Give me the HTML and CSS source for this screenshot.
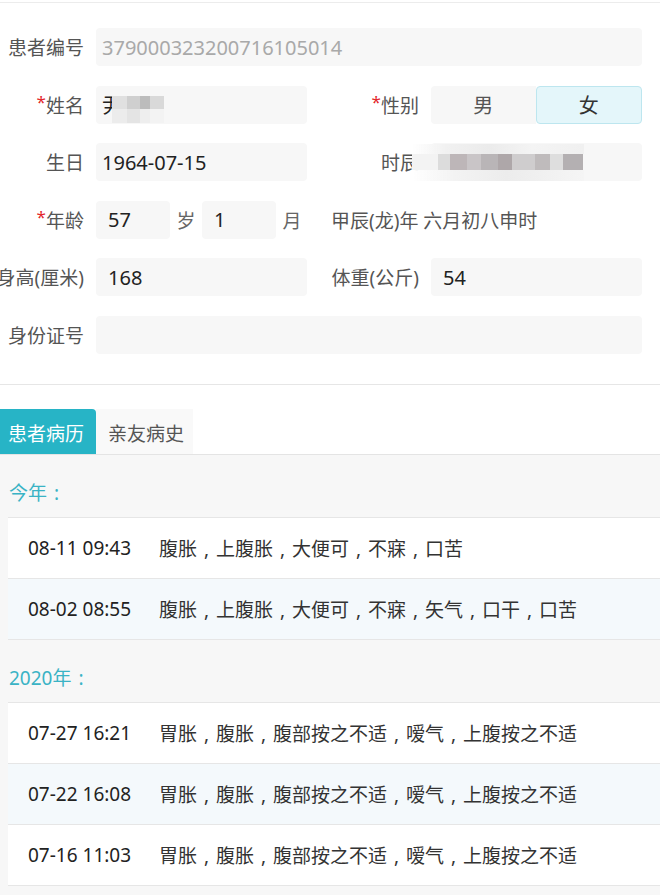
FILE: index.html
```html
<!DOCTYPE html>
<html lang="zh-CN">
<head>
<meta charset="utf-8">
<title>患者信息</title>
<link rel="stylesheet" href="styles.css">
</head>
<body>
<div class="page">
  <section class="form">
    <div class="row">
      <div class="field full">
        <div class="label">患者编号</div>
        <div class="input disabled">379000323200716105014</div>
      </div>
    </div>
    <div class="row">
      <div class="field">
        <div class="label"><span class="req">*</span>姓名</div>
        <div class="input">尹
          <div class="mosaic name-mosaic">
            <i class="c1"></i><i class="c2"></i><i class="c3"></i><i class="c4"></i>
            <i class="c5"></i><i class="c6"></i><i class="c7"></i><i class="c8"></i>
          </div>
        </div>
      </div>
      <div class="field right">
        <div class="label"><span class="req">*</span>性别</div>
        <div class="toggle"><span>男</span><span class="on">女</span></div>
      </div>
    </div>
    <div class="row">
      <div class="field">
        <div class="label">生日</div>
        <div class="input">1964-07-15</div>
      </div>
      <div class="field right">
        <div class="label">时辰</div>
        <div class="input"></div>
        <div class="mosaic time-mosaic">
          <div class="band top"></div>
          <div class="band mid">
            <i style="width:26px;background:#f3f3f3"></i>
            <i style="width:12px;background:#dcdcdc"></i>
            <i style="width:17px;background:#bdb6b8"></i>
            <i style="width:14px;background:#c9c5c7"></i>
            <i style="width:17px;background:#b9b5b7"></i>
            <i style="width:14px;background:#aea7a9"></i>
            <i style="width:23px;background:#cfcdce"></i>
            <i style="width:15px;background:#bfbbbc"></i>
            <i style="width:13px;background:#dedede"></i>
            <i style="width:20px;background:#b4b0b2"></i>
          </div>
          <div class="band bottom"></div>
        </div>
      </div>
    </div>
    <div class="row">
      <div class="field">
        <div class="label"><span class="req">*</span>年龄</div>
        <div class="age">
          <div class="input num small">57</div>
          <span class="unit">岁</span>
          <div class="input num small">1</div>
          <span class="unit">月</span>
        </div>
      </div>
      <div class="field right">
        <span class="lunar">甲辰(龙)年 六月初八申时</span>
      </div>
    </div>
    <div class="row">
      <div class="field">
        <div class="label">身高(厘米)</div>
        <div class="input num">168</div>
      </div>
      <div class="field right">
        <div class="label">体重(公斤)</div>
        <div class="input num">54</div>
      </div>
    </div>
    <div class="row">
      <div class="field full">
        <div class="label">身份证号</div>
        <div class="input"></div>
      </div>
    </div>
  </section>

  <nav class="tabs">
    <div class="tab active">患者病历</div>
    <div class="tab">亲友病史</div>
  </nav>

  <section class="history">
    <div class="year">今年<span class="p">:</span></div>
    <div class="list">
      <div class="item"><span class="date">08-11 09:43</span><span class="desc">腹胀<span class="p">,</span>上腹胀<span class="p">,</span>大便可<span class="p">,</span>不寐<span class="p">,</span>口苦</span></div>
      <div class="item alt"><span class="date">08-02 08:55</span><span class="desc">腹胀<span class="p">,</span>上腹胀<span class="p">,</span>大便可<span class="p">,</span>不寐<span class="p">,</span>矢气<span class="p">,</span>口干<span class="p">,</span>口苦</span></div>
    </div>
    <div class="year">2020年<span class="p">:</span></div>
    <div class="list">
      <div class="item"><span class="date">07-27 16:21</span><span class="desc">胃胀<span class="p">,</span>腹胀<span class="p">,</span>腹部按之不适<span class="p">,</span>嗳气<span class="p">,</span>上腹按之不适</span></div>
      <div class="item alt"><span class="date">07-22 16:08</span><span class="desc">胃胀<span class="p">,</span>腹胀<span class="p">,</span>腹部按之不适<span class="p">,</span>嗳气<span class="p">,</span>上腹按之不适</span></div>
      <div class="item"><span class="date">07-16 11:03</span><span class="desc">胃胀<span class="p">,</span>腹胀<span class="p">,</span>腹部按之不适<span class="p">,</span>嗳气<span class="p">,</span>上腹按之不适</span></div>
    </div>
  </section>
</div>
</body>
</html>
```

FILE: styles.css
```css
* {
  box-sizing: border-box;
}

body {
  margin: 0;
  background: #fff;
  font-family: "Noto Sans", "Noto Sans CJK SC", sans-serif;
  color: #333;
}

.page {
  padding-top: 2px;
  overflow: hidden;
}

/* ---------- form ---------- */
.form {
  border-top: 1px solid #ececec;
  border-bottom: 1px solid #e6e6e6;
  padding: 25px 18px 30px 0;
  display: flex;
  flex-direction: column;
  gap: 19.6px;
}

.row {
  display: flex;
  gap: 26px;
  height: 38px;
}

.field {
  display: flex;
  align-items: center;
  gap: 12px;
  width: 307px;
  flex-shrink: 0;
  position: relative;
}

.field.right {
  width: 309px;
}

.field.full {
  width: auto;
  flex: 1;
}

.label {
  width: 84px;
  flex-shrink: 0;
  display: flex;
  justify-content: flex-end;
  align-items: center;
  white-space: nowrap;
  font-size: 19px;
  color: #555;
}

.right .label {
  width: 86px;
}

.req {
  color: #e3262b;
  font-size: 17px;
  align-self: flex-start;
  margin-top: -1px;
}

.input {
  flex: 1;
  height: 38px;
  background: #f7f7f7;
  border-radius: 4px;
  display: flex;
  align-items: center;
  padding-left: 6px;
  font-size: 20px;
  color: #222;
  position: relative;
  white-space: nowrap;
}

.input.num {
  padding-left: 12px;
}

.input.disabled {
  color: #a9a9a9;
}

.age {
  display: flex;
  align-items: center;
  gap: 6.5px;
  height: 38px;
}

.input.small {
  flex: 0 0 74px;
}

.unit {
  font-size: 19px;
  color: #666;
}

.lunar {
  font-size: 19px;
  color: #555;
  white-space: nowrap;
  margin-left: -2px;
}

.toggle {
  flex: 1;
  height: 38px;
  display: flex;
}

.toggle span {
  flex: 1;
  display: flex;
  align-items: center;
  justify-content: center;
  font-size: 20px;
  color: #555;
  background: #f7f7f7;
  border-radius: 4px 0 0 4px;
}

.toggle span.on {
  background: #e4f6fa;
  border: 1px solid #bde6ef;
  border-radius: 4px;
  color: #333;
}

/* privacy mosaic overlays */
.mosaic {
  position: absolute;
  filter: blur(0.7px);
}

.mosaic i {
  display: block;
}

.name-mosaic {
  left: 16px;
  top: 10px;
  width: 52px;
  height: 27px;
  display: grid;
  grid-template-columns: 15px 13px 10px 14px;
  grid-template-rows: 13px 14px;
}

.name-mosaic .c1 { background: #e0e0e0; }
.name-mosaic .c2 { background: #cfcfcf; }
.name-mosaic .c3 { background: #bcbcbc; }
.name-mosaic .c4 { background: #d9d9d9; }
.name-mosaic .c5 { background: #ececec; }
.name-mosaic .c6 { background: #e4e4e4; }
.name-mosaic .c7 { background: #eeeeee; }
.name-mosaic .c8 { background: #f3f3f3; }

.time-mosaic {
  left: 79px;
  top: 1px;
  width: 172px;
  height: 37px;
  display: flex;
  flex-direction: column;
}

.time-mosaic .band {
  display: flex;
}

.time-mosaic .top {
  height: 10px;
  background: linear-gradient(90deg, rgba(255,255,255,0.95) 0, #f1f1f1 20%, #ebebeb 45%, #f4f4f4 70%, #f0f0f0 100%);
}

.time-mosaic .mid {
  height: 16px;
}

.time-mosaic .bottom {
  height: 11px;
  background: linear-gradient(90deg, rgba(255,255,255,0.95) 0, #f3f3f3 25%, #ececec 55%, #f5f5f5 100%);
}

/* ---------- tabs ---------- */
.tabs {
  display: flex;
  margin-top: 24px;
  height: 45px;
}

.tab {
  font-size: 19px;
  display: flex;
  align-items: center;
  padding-top: 3px;
  white-space: nowrap;
}

.tab.active {
  width: 96px;
  padding-left: 8px;
  background: #27b4c6;
  color: #fff;
  border-top-right-radius: 4px;
}

.tab:not(.active) {
  width: 97px;
  padding-left: 12px;
  background: #f9f9f9;
  color: #555;
}

/* ---------- history ---------- */
.history {
  border-top: 1px solid #e4e4e4;
  background: #f7f7f7;
  padding-bottom: 12px;
}

.year {
  padding: 26px 9px 12px;
  line-height: 24px;
  font-size: 19px;
  color: #3ab3c5;
}

/* centred full-width punctuation */
.p {
  display: inline-block;
  width: 1em;
  text-align: center;
  line-height: 24px;
}

.list {
  margin-left: 8px;
  border-top: 1px solid #e6e6e6;
}

.item {
  height: 61px;
  border-bottom: 1px solid #e6e6e6;
  display: flex;
  align-items: center;
  padding-left: 20px;
  background: #fff;
  font-size: 19px;
  white-space: nowrap;
}

.item.alt {
  background: #f4f9fc;
}

.date {
  width: 131px;
  flex-shrink: 0;
  color: #222;
}

.desc {
  color: #333;
}
```
